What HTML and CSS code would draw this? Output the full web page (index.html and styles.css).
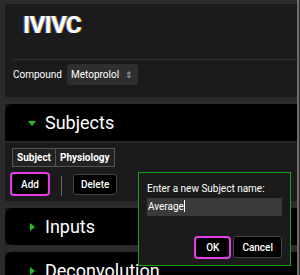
FILE: index.html
```html
<!DOCTYPE html>
<html lang="en">
<head>
    <meta charset="UTF-8">
    <meta name="viewport" content="width=device-width, initial-scale=1.0">
    <title>IVIVC</title>
    <link rel="stylesheet" href="styles.css">
</head>
<body>

<div class="page">
    <div class="content">
        <div class="card header">
            <h1 class="title">IVIVC</h1>
            <div class="compound-row">
                <span class="label">Compound</span>
                <div class="select">Metoprolol <span class="arrows">&#8661;</span></div>
            </div>
        </div>

        <div class="card section">
            <div class="section-head">
                <span class="tri tri-down"></span>
                <span class="section-title">Subjects</span>
            </div>
            <div class="section-body">
                <div class="tabs">
                    <div class="tab">Subject</div>
                    <div class="tab">Physiology</div>
                </div>
                <div class="actions">
                    <button class="btn btn-focus">Add</button>
                    <span class="sep"></span>
                    <button class="btn">Delete</button>
                </div>
            </div>
        </div>

        <div class="card section">
            <div class="section-head closed">
                <span class="tri tri-right"></span>
                <span class="section-title">Inputs</span>
            </div>
        </div>

        <div class="card section">
            <div class="section-head closed">
                <span class="tri tri-right"></span>
                <span class="section-title">Deconvolution</span>
            </div>
        </div>
    </div>
    <div class="scroll"></div>
</div>

<div class="dialog">
    <div class="dialog-label">Enter a new Subject name:</div>
    <div class="dialog-input">Average<span class="caret"></span></div>
    <div class="dialog-buttons">
        <button class="btn btn-focus">OK</button>
        <button class="btn">Cancel</button>
    </div>
</div>

</body>
</html>
```

FILE: styles.css
```css
body {
    margin: 0;
    padding: 0;
    background-color: #2b2b2b;
    font-family: Roboto, "Liberation Sans", sans-serif;
    color: #fff;
    width: 300px;
    height: 275px;
    overflow: hidden;
    position: relative;
}
.page {
    display: flex;
    height: 275px;
}
.content {
    flex: 1;
    padding: 4px 0 0 5px;
    display: flex;
    flex-direction: column;
    gap: 7px;
}
.scroll {
    width: 2px;
    margin-right: 1px;
    background-color: #6e6e6e;
}
.card {
    background-color: #1b1b1b;
}
.header {
    padding: 9px 0 12px 0;
}
.title {
    margin: 0 0 0 18px;
    font-size: 24px;
    font-weight: 700;
    letter-spacing: -0.6px;
    line-height: 24px;
    height: 46px;
    text-shadow: -1px 0 0 #3a5aff, 1px 0 0 #c8a000;
}
.compound-row {
    margin-left: 8px;
    border-top: 1px solid #333;
    padding-top: 4px;
    display: flex;
    align-items: center;
    gap: 5px;
    font-size: 10px;
}
.select {
    background-color: #2e2e2e;
    border-radius: 3px;
    height: 21px;
    box-sizing: border-box;
    padding: 0 5px 0 4px;
    display: flex;
    gap: 6px;
    align-items: center;
}
.arrows {
    color: #aaa;
    font-size: 9px;
}
.section-head {
    background-color: #000;
    border-radius: 7px 0 0 0;
    height: 37px;
    display: flex;
    align-items: center;
    padding-left: 23px;
    gap: 9px;
}
.section-head.closed {
    border-radius: 7px 0 0 7px;
}
.section-title {
    font-size: 18px;
}
.tri {
    width: 0;
    height: 0;
}
.tri-down {
    border-left: 4px solid transparent;
    border-right: 4px solid transparent;
    border-top: 5px solid #1ec21e;
    margin-top: 2px;
}
.tri-right {
    border-top: 4px solid transparent;
    border-bottom: 4px solid transparent;
    border-left: 5px solid #1ec21e;
    margin-left: 2px;
    margin-right: 1px;
}
.section-body {
    border-top: 2px solid #262626;
    padding: 5px 0 5px 5px;
}
.tabs {
    display: flex;
    margin-left: 2px;
}
.tab {
    border: 1px solid #555;
    background-color: #222;
    font-size: 10px;
    font-weight: bold;
    padding: 0 4px;
    height: 17px;
    line-height: 17px;
}
.tab + .tab {
    border-left: none;
}
.actions {
    display: flex;
    align-items: center;
    gap: 11px;
    margin-top: 5px;
}
.btn {
    background-color: #000;
    color: #fff;
    border: 1px solid #444;
    border-radius: 3px;
    font-family: Roboto, "Liberation Sans", sans-serif;
    font-size: 10px;
    font-weight: 500;
    padding: 0 7px;
    height: 21px;
}
.btn-focus {
    border: 2px solid #e63ce6;
    border-radius: 4px;
    height: 24px;
    padding: 0 9px;
}
.sep {
    width: 1px;
    height: 20px;
    background-color: #666;
    margin-top: 4px;
}
.dialog {
    position: absolute;
    left: 138px;
    top: 172px;
    width: 135px;
    height: 84px;
    padding: 8px 8px 0 8px;
    background-color: #1b1b1b;
    border: 1px solid #1aa01a;
    font-size: 10px;
}
.dialog-label {
    margin-top: 2px;
}
.dialog-input {
    margin-top: 4px;
    background-color: #3a3a3a;
    height: 18px;
    line-height: 18px;
    padding-left: 1px;
}
.caret {
    display: inline-block;
    width: 1px;
    height: 12px;
    background-color: #fff;
    vertical-align: -2px;
}
.dialog-buttons {
    display: flex;
    justify-content: flex-end;
    gap: 2px;
    margin-top: 20px;
}
.dialog-buttons .btn {
    height: 22px;
    padding: 0 8px;
}
.dialog-buttons .btn-focus {
    height: 23px;
    padding: 0 10px;
}
```
